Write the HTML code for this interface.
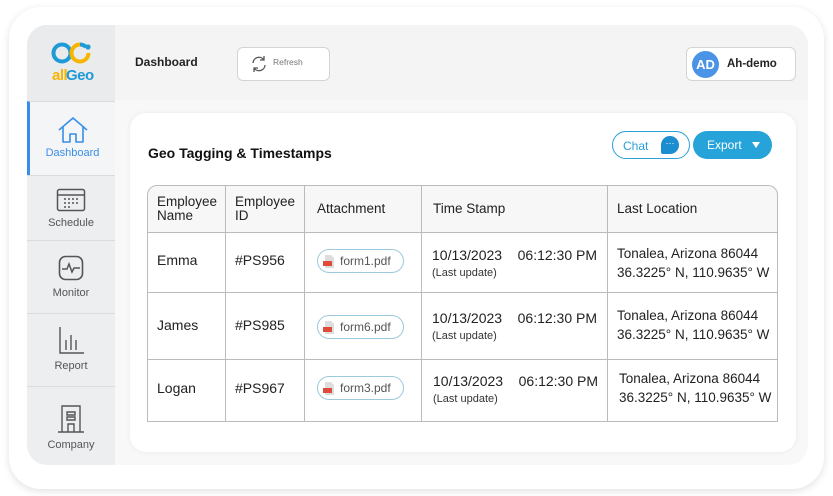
<!DOCTYPE html>
<html><head><meta charset="utf-8"><style>
*{margin:0;padding:0;box-sizing:border-box}
body{width:833px;height:496px;background:#fff;font-family:"Liberation Sans",sans-serif;position:relative;overflow:hidden;color:#222}
.outer{position:absolute;left:9px;top:7px;width:815px;height:482px;background:#fff;border-radius:32px;box-shadow:0 2px 8px rgba(0,0,0,.12)}
.app{position:absolute;left:27px;top:25px;width:781px;height:440px;border-radius:20px;overflow:hidden;background:#f8f8f8}
.side{position:absolute;left:0;top:0;width:88px;height:440px;background:#eceef0}
.logo{position:absolute;left:0;top:0;width:88px;height:76px;background:#e9ebed}
.nav{position:absolute;left:0;width:88px;border-top:1px solid #d9dcdf;text-align:center;font-size:11px;color:#555}
.nav svg{display:block;margin:0 auto}
.top{position:absolute;left:88px;top:0;right:0;height:75px;background:#f4f4f4}
.card{position:absolute;left:103px;top:88px;width:666px;height:339px;background:#fff;border-radius:16px;box-shadow:0 0 6px rgba(0,0,0,.06)}
table{position:absolute;left:120px;top:160px;border-collapse:separate;border-spacing:0;width:631px;font-size:14px}
td,th{border-right:1px solid #bbb;border-bottom:1px solid #bbb;text-align:left;font-weight:normal;vertical-align:top}
tr td:first-child,tr th:first-child{border-left:1px solid #bbb}
th{background:#f7f7f7;border-top:1px solid #bbb;height:48px;vertical-align:middle;padding-left:9px;font-size:13.5px;line-height:14px}
th:first-child{border-top-left-radius:10px}
th:last-child{border-top-right-radius:10px}
td{padding-left:9px}
td.att{padding-left:12px}
.pill{display:inline-flex;align-items:center;gap:5px;border:1px solid #9cc9dd;border-radius:13px;height:24px;padding:0 12px 0 5px;font-size:12px;color:#555}
.sm{font-size:11px;color:#333}
</style></head><body>
<div class="outer"></div>
<div class="app">
 <div class="side">
  <div class="logo">
   <svg width="50" height="44" viewBox="0 0 50 44" style="position:absolute;left:20px;top:14px">
    <circle cx="15" cy="14" r="8.5" fill="none" stroke="#1e9ad6" stroke-width="4"/>
    <path d="M33 5.5a8.5 8.5 0 1 0 8.5 8.5" fill="none" stroke="#f7b500" stroke-width="4"/>
    <path d="M33 5.5a8.5 8.5 0 0 1 6 2.5" fill="none" stroke="#1e9ad6" stroke-width="4"/>
    <circle cx="41" cy="8" r="2.6" fill="#1e9ad6"/>
    <text x="5" y="41" font-size="15" font-weight="bold" fill="#f7b500" font-family="Liberation Sans" letter-spacing="-0.5">all</text>
    <text x="19" y="41" font-size="15" font-weight="bold" fill="#1e9ad6" font-family="Liberation Sans" letter-spacing="-0.5">Geo</text>
   </svg>
  </div>
  <div class="nav" style="top:76px;height:74px;background:#f3f5f7;border-left:3px solid #3a8ee6;color:#3a8ee6;padding-top:14px">
   <svg width="32" height="28" viewBox="0 0 32 28"><path d="M2 14L16 2l14 12M6 11v15h7v-8h6v8h7V11" fill="none" stroke="#3a8ee6" stroke-width="1.6" stroke-linejoin="round"/></svg>
   <div style="margin-top:3px">Dashboard</div>
  </div>
  <div class="nav" style="top:150px;height:65px;padding-top:12px">
   <svg width="30" height="24" viewBox="0 0 30 24"><rect x="1.5" y="1.5" width="27" height="21" rx="2" fill="none" stroke="#555" stroke-width="1.5"/><line x1="1.5" y1="7" x2="28.5" y2="7" stroke="#555" stroke-width="1.5"/><g fill="#555"><circle cx="9" cy="11" r="1"/><circle cx="13" cy="11" r="1"/><circle cx="17" cy="11" r="1"/><circle cx="21" cy="11" r="1"/><circle cx="9" cy="15" r="1"/><circle cx="13" cy="15" r="1"/><circle cx="17" cy="15" r="1"/><circle cx="21" cy="15" r="1"/><circle cx="9" cy="19" r="1"/><circle cx="13" cy="19" r="1"/></g></svg>
   <div style="margin-top:5px">Schedule</div>
  </div>
  <div class="nav" style="top:215px;height:73px;padding-top:14px">
   <svg width="26" height="26" viewBox="0 0 26 26"><rect x="1.5" y="1.5" width="23" height="23" rx="6" fill="none" stroke="#555" stroke-width="1.6"/><path d="M4 14h5l2-5 3 8 2-4h6" fill="none" stroke="#555" stroke-width="1.5"/></svg>
   <div style="margin-top:6px">Monitor</div>
  </div>
  <div class="nav" style="top:288px;height:73px;padding-top:12px">
   <svg width="26" height="28" viewBox="0 0 26 28"><path d="M2 1v26h24M8 14v10M13 9v15M18 14v10" fill="none" stroke="#555" stroke-width="1.4"/></svg>
   <div style="margin-top:6px">Report</div>
  </div>
  <div class="nav" style="top:361px;height:79px;padding-top:18px">
   <svg width="28" height="28" viewBox="0 0 28 28"><path d="M5 27V1h18v26M1 27h26M11 27v-8h6v8M10 7h8v3h-8zM10 12h8v3h-8z" fill="none" stroke="#555" stroke-width="1.4"/></svg>
   <div style="margin-top:6px">Company</div>
  </div>
 </div>
 <div class="top">
  <div style="position:absolute;left:20px;top:30px;font-size:12px;font-weight:bold;color:#222">Dashboard</div>
  <div style="position:absolute;left:122px;top:22px;width:93px;height:34px;border:1px solid #d4d4d4;border-radius:6px;background:#fff">
   <svg width="18" height="18" viewBox="0 0 18 18" style="position:absolute;left:12px;top:7px"><path d="M3 8a6 6 0 0 1 11-3M15 10a6 6 0 0 1-11 3M14 1v4h-4M4 17v-4h4" fill="none" stroke="#555" stroke-width="1.3"/></svg>
   <span style="position:absolute;left:35px;top:9px;font-size:8.5px;color:#777">Refresh</span>
  </div>
  <div style="position:absolute;left:571px;top:22px;width:110px;height:34px;border:1px solid #d4d4d4;border-radius:6px;background:#fff">
   <div style="position:absolute;left:5px;top:3px;width:27px;height:27px;border-radius:50%;background:#4a93e6;color:#fff;font-weight:bold;font-size:13px;line-height:27px;text-align:center">AD</div>
   <span style="position:absolute;left:40px;top:10px;font-size:11.5px;font-weight:bold;color:#222">Ah-demo</span>
  </div>
 </div>
 <div class="card"></div>
 <div style="position:absolute;left:121px;top:120px;font-size:14px;font-weight:bold;color:#111">Geo Tagging &amp; Timestamps</div>
 <div style="position:absolute;left:585px;top:106px;width:78px;height:28px;border:1.3px solid #2aa0d8;border-radius:14px;color:#2aa0d8;font-size:12px">
  <span style="position:absolute;left:10px;top:7px">Chat</span>
  <div style="position:absolute;left:48px;top:4px;width:18px;height:18px;border-radius:50% 50% 50% 2px;background:#1c8ed0;color:#fff;font-size:9px;line-height:14px;text-align:center">···</div>
 </div>
 <div style="position:absolute;left:666px;top:106px;width:79px;height:28px;border-radius:14px;background:#26a3d9;color:#fff;font-size:12px">
  <span style="position:absolute;left:14px;top:7px">Export</span>
  <span style="position:absolute;left:59px;top:11px;width:0;height:0;border-left:4.5px solid transparent;border-right:4.5px solid transparent;border-top:6px solid #fff"></span>
 </div>
 <table>
  <tr><th style="width:79px">Employee<br>Name</th><th style="width:79px">Employee<br>ID</th><th style="width:117px;padding-left:12px">Attachment</th><th style="width:186px;padding-left:11px">Time Stamp</th><th>Last Location</th></tr>
  <tr style="height:60px"><td style="padding-top:19px">Emma</td><td style="padding-top:19px">#PS956</td><td class="att" style="padding-top:16px"><span class="pill"><svg width="12" height="13" viewBox="0 0 12 13"><path d="M2 0h6l3 3v10H2z" fill="#ddd"/><rect x="0" y="6" width="9" height="5" fill="#e04a3a"/></svg>form1.pdf</span></td><td style="padding-top:14px;line-height:16px;padding-left:10px">10/13/2023&nbsp;&nbsp;&nbsp; 06:12:30 PM<br><span class="sm">(Last update)</span></td><td style="padding-top:11px;line-height:19px;font-size:13.5px">Tonalea, Arizona 86044<br>36.3225° N, 110.9635° W</td></tr>
  <tr style="height:67px"><td style="padding-top:24px">James</td><td style="padding-top:24px">#PS985</td><td class="att" style="padding-top:22px"><span class="pill"><svg width="12" height="13" viewBox="0 0 12 13"><path d="M2 0h6l3 3v10H2z" fill="#ddd"/><rect x="0" y="6" width="9" height="5" fill="#e04a3a"/></svg>form6.pdf</span></td><td style="padding-top:17px;line-height:16px;padding-left:10px">10/13/2023&nbsp;&nbsp;&nbsp; 06:12:30 PM<br><span class="sm">(Last update)</span></td><td style="padding-top:13px;line-height:19px;font-size:13.5px">Tonalea, Arizona 86044<br>36.3225° N, 110.9635° W</td></tr>
  <tr style="height:62px"><td style="padding-top:20px">Logan</td><td style="padding-top:20px">#PS967</td><td class="att" style="padding-top:16px"><span class="pill"><svg width="12" height="13" viewBox="0 0 12 13"><path d="M2 0h6l3 3v10H2z" fill="#ddd"/><rect x="0" y="6" width="9" height="5" fill="#e04a3a"/></svg>form3.pdf</span></td><td style="padding-top:13px;line-height:16px;padding-left:11px">10/13/2023&nbsp;&nbsp;&nbsp; 06:12:30 PM<br><span class="sm">(Last update)</span></td><td style="padding-top:9px;line-height:19px;font-size:13.5px;padding-left:11px">Tonalea, Arizona 86044<br>36.3225° N, 110.9635° W</td></tr>
 </table>
</div>
</body></html>
